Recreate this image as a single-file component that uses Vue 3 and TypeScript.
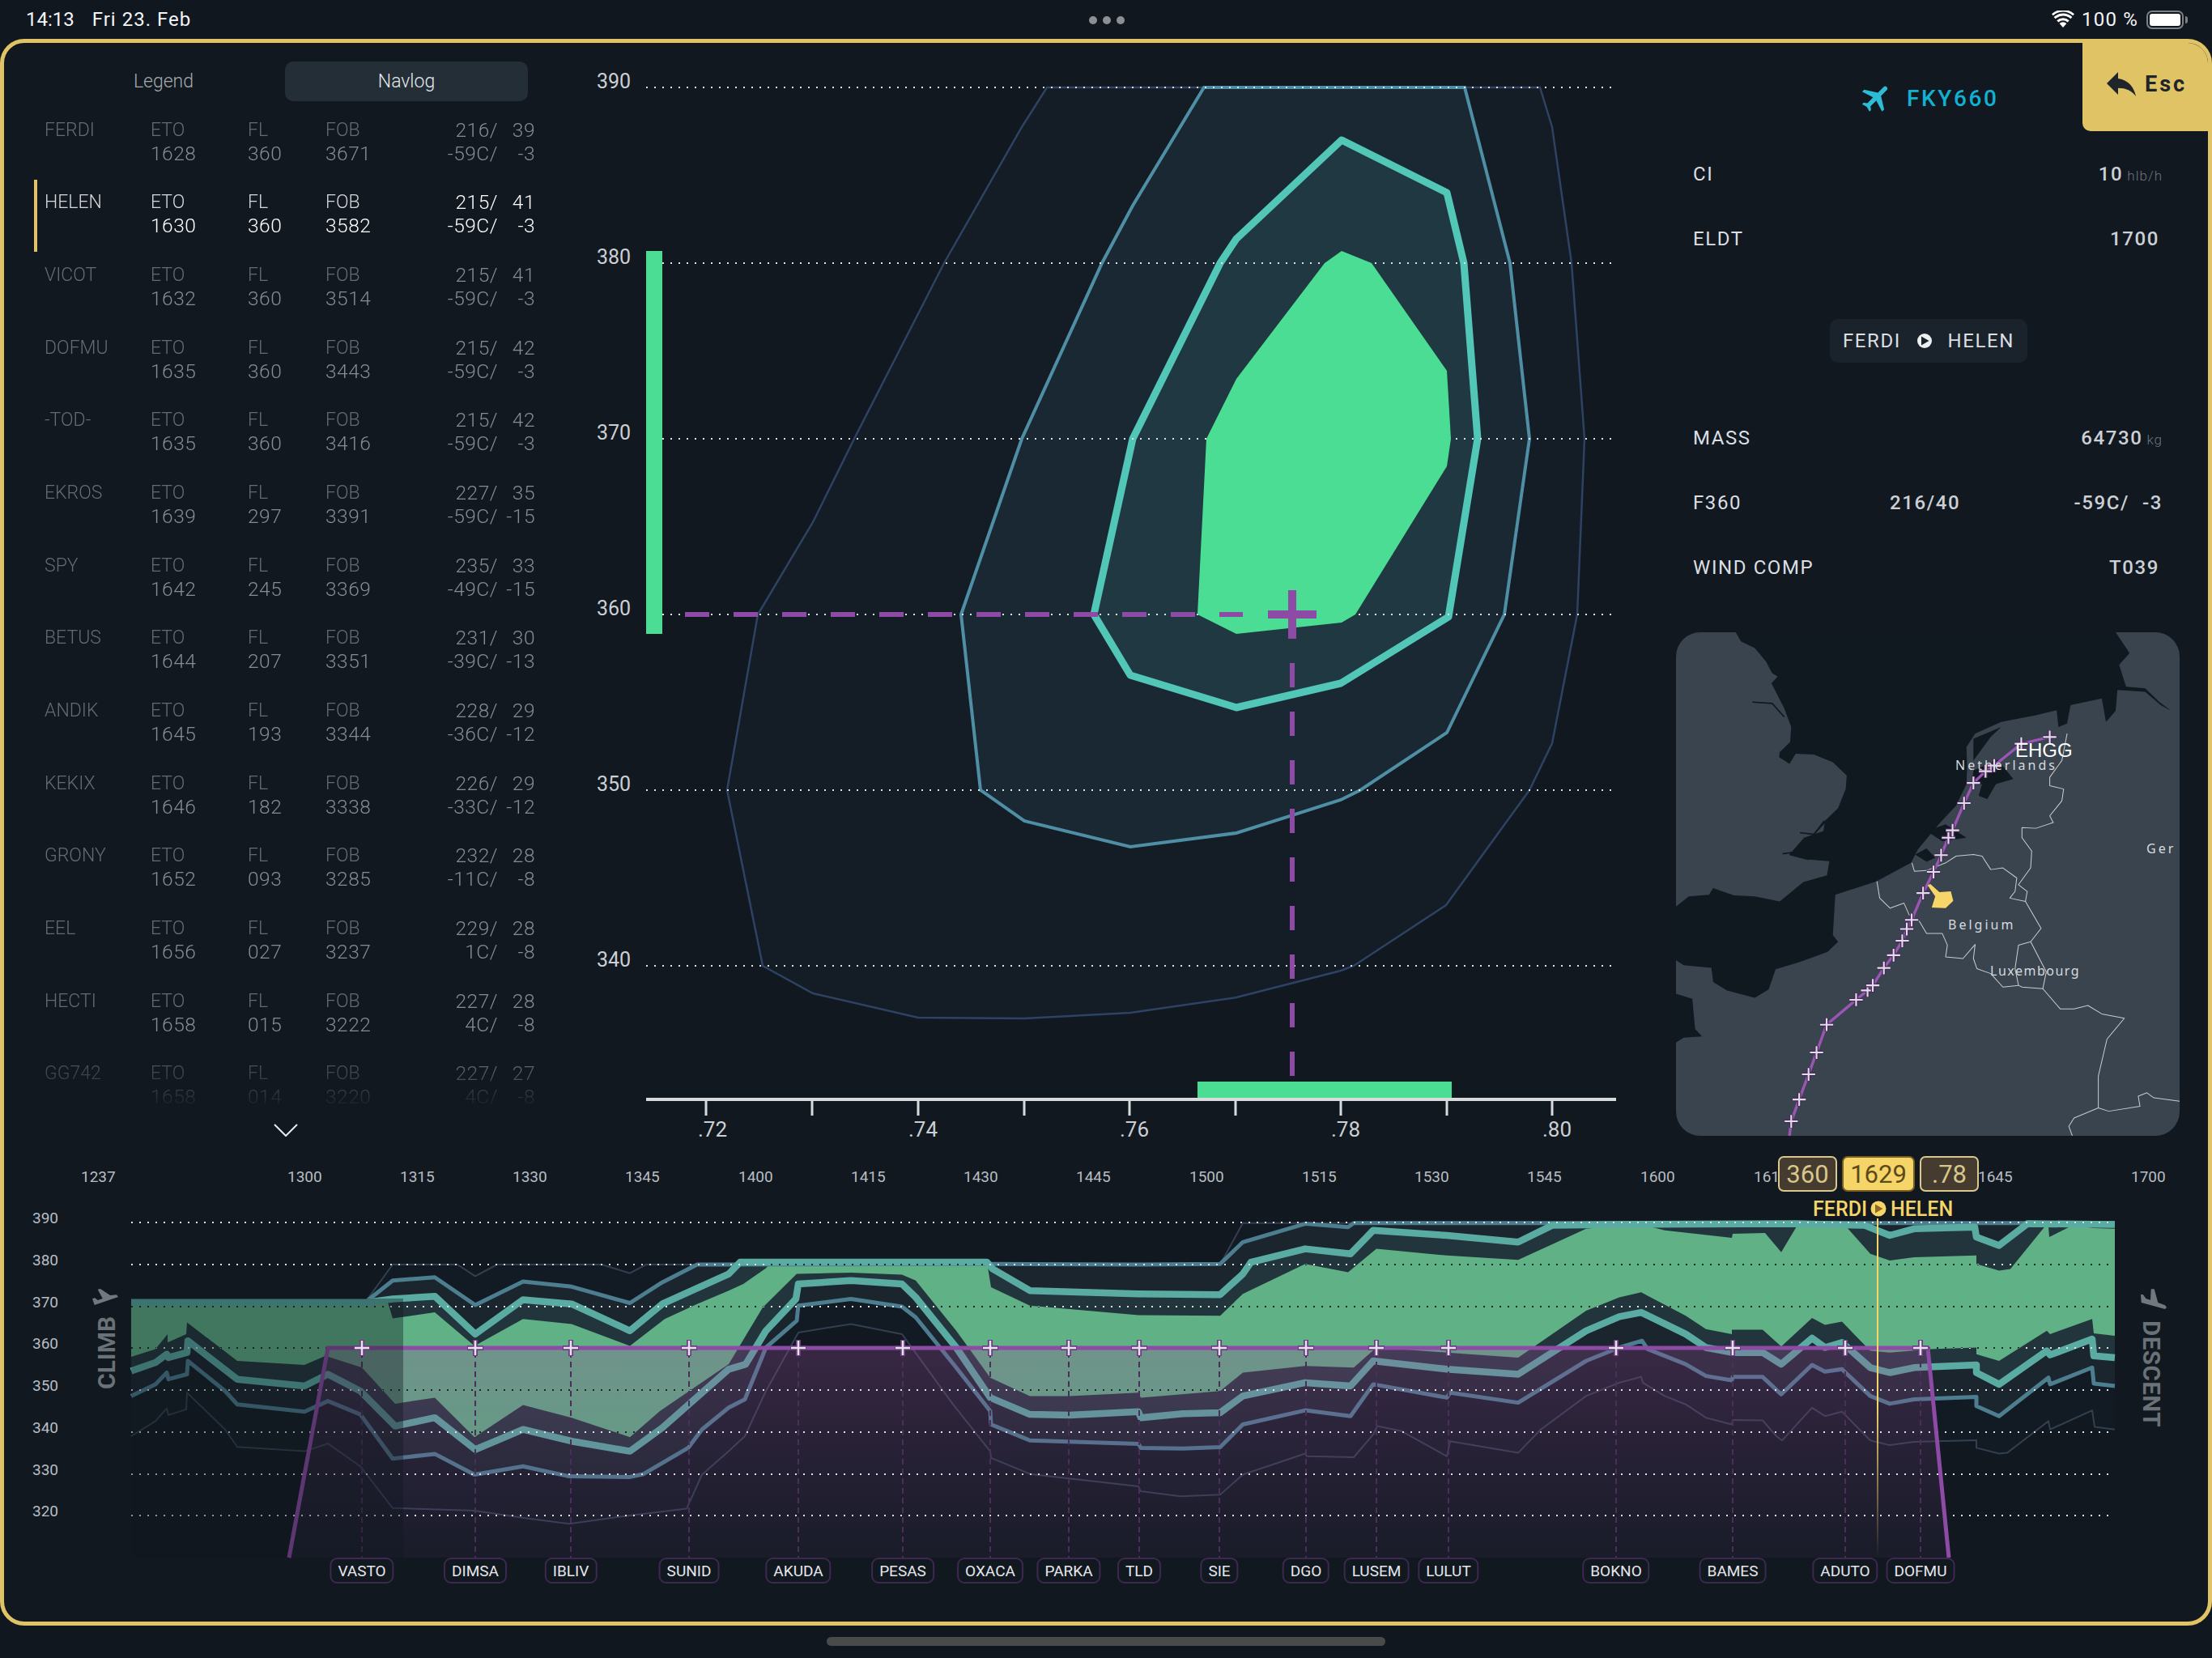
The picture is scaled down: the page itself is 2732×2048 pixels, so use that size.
<template>
  <div class="screen">
    <header class="status-bar">
      <div class="status-left">
        <span>14:13</span>
        <span class="status-date">Fri 23. Feb</span>
      </div>
      <div class="status-dots"><i></i><i></i><i></i></div>
      <div class="status-right">
        <svg class="wifi" viewBox="0 0 28 22" width="28" height="22">
          <path d="M14 21 9.6 16a6.4 6.4 0 0 1 8.8 0z" fill="#fff" />
          <path d="M7.3 13.4a9.8 9.8 0 0 1 13.4 0" fill="none" stroke="#fff" stroke-width="3" />
          <path d="M3.6 9.2a15.2 15.2 0 0 1 20.8 0" fill="none" stroke="#fff" stroke-width="3" />
          <path d="M0.9 5.2a19.6 19.6 0 0 1 26.2 0" fill="none" stroke="#fff" stroke-width="2.6" />
        </svg>
        <span>100 %</span>
        <div class="battery"><div class="battery-level"></div></div>
        <div class="battery-cap"></div>
      </div>
    </header>

    <main class="frame">
      <button class="esc-tab">
        <svg viewBox="3 5 18 15" width="36" height="30"><path :d="replyIcon" fill="#20252c" /></svg>
        <span>Esc</span>
      </button>

      <section class="top-row">
        <aside class="navlog">
          <div class="tabs">
            <div class="tab">Legend</div>
            <div class="tab tab-active">Navlog</div>
          </div>
          <div class="nav-list">
            <div v-for="row in navRows" :key="row.name" class="nav-row" :class="{ active: row.name === 'HELEN' }">
              <div class="cell">
                <span class="cap">{{ row.name }}</span>
              </div>
              <div class="cell">
                <span class="cap">ETO</span>
                <span class="val">{{ row.eto }}</span>
              </div>
              <div class="cell">
                <span class="cap">FL</span>
                <span class="val">{{ row.fl }}</span>
              </div>
              <div class="cell">
                <span class="cap">FOB</span>
                <span class="val">{{ row.fob }}</span>
              </div>
              <div class="wind">
                <span>{{ row.dir }}/</span><span>{{ row.spd }}</span>
                <span>{{ row.temp }}/</span><span>{{ row.comp }}</span>
              </div>
            </div>
          </div>
          <svg class="chevron" viewBox="0 0 30 16" width="30" height="16">
            <path d="M1 1 15 15 29 1" fill="none" stroke="#e8eaec" stroke-width="2" />
          </svg>
        </aside>

        <svg class="envelope" viewBox="720 53 1335 1367" width="1335" height="1367">
          <polygon :points="envOuter" fill="#141c25" stroke="#2e4263" stroke-width="2.5" />
          <polygon :points="envMid" fill="#1a2833" stroke="#4f8fa5" stroke-width="4" />
          <polygon :points="envInner" fill="#203841" stroke="#52c7b8" stroke-width="9" stroke-linejoin="round" />
          <line v-for="y in envGrid" :key="y" x1="798" x2="1991" :y1="y" :y2="y" class="dots" />
          <polygon :points="envGreen" fill="#4cdd94" />

          <text v-for="(l, i) in envLevels" :key="l" x="737" :y="envGrid[i]" class="env-level" dy="1">{{ l }}</text>

          <rect x="798" y="310" width="20" height="473" fill="#4cdd94" />
          <rect x="1479" y="1336" width="314" height="20" fill="#4cdd94" />

          <line x1="846" x2="1535" y1="759" y2="759" stroke="#8e4ba5" stroke-width="6" stroke-dasharray="30 30" />
          <line x1="1596" x2="1596" y1="819" y2="1329" stroke="#8e4ba5" stroke-width="6" stroke-dasharray="30 30" />
          <rect x="1566" y="754" width="60" height="10" fill="#8e4ba5" />
          <rect x="1591" y="729" width="10" height="60" fill="#8e4ba5" />

          <line x1="798" x2="1996" y1="1358" y2="1358" stroke="#d8dbde" stroke-width="4" />
          <line v-for="x in envTicks" :key="x" :x1="x" :x2="x" y1="1358" y2="1378" stroke="#d8dbde" stroke-width="3" />
          <text v-for="t in envMach" :key="t.label" :x="t.x" y="1404" class="env-mach">{{ t.label }}</text>
        </svg>

        <aside class="info">
          <div class="callsign">
            <svg viewBox="0 0 24 24" width="44" height="44" class="callsign-plane"><path :d="flightIcon" fill="#2cbcd6" /></svg>
            <span>FKY660</span>
          </div>
          <div class="info-row">
            <span>CI</span>
            <span class="info-val">10<small>hlb/h</small></span>
          </div>
          <div class="info-row">
            <span>ELDT</span>
            <span class="info-val pad">1700</span>
          </div>
          <div class="route-pill">
            <span>FERDI</span>
            <svg viewBox="0 0 18 18" width="18" height="18">
              <circle cx="9" cy="9" r="9" fill="#eceef0" />
              <path d="M5 3.5 14.5 9 5 14.5z" fill="#1a222b" />
            </svg>
            <span>HELEN</span>
          </div>
          <div class="info-row">
            <span>MASS</span>
            <span class="info-val">64730<small>kg</small></span>
          </div>
          <div class="info-row wide">
            <span>F360</span>
            <span class="info-val">216/40</span>
            <span class="info-val temp"><span>-59C/</span><span>-3</span></span>
          </div>
          <div class="info-row">
            <span>WIND COMP</span>
            <span class="info-val pad">T039</span>
          </div>

          <svg class="map" viewBox="0 0 622 622" width="622" height="622">
            <rect width="622" height="622" fill="#3a444f" />
            <g transform="scale(.4286 .4146) translate(-23 -28)">
              <path :d="seaPath" fill="#101820" />
              <path d="M880 440 950 408 995 465 945 480 920 525 895 515 905 480 875 482Z" fill="#101820" />
              <path d="M880 345 960 310 930 340 880 410Z" fill="#101820" />
              <path d="M712 690 745 672 770 700 745 712ZM745 620 800 600 860 640 790 650Z" fill="#101820" />
              <path d="M23 1105 70 1120 78 1210 98 1232 45 1236 23 1250Z" fill="#101820" />
              <g fill="none" stroke="#101820" stroke-width="4">
                <path d="M243 236 300 240 335 280" />
                <path d="M330 688 385 680 450 590" />
                <path d="M350 690 405 705" />
                <path d="M380 625 420 630 455 590" />
              </g>
              <g fill="none" stroke="#c8ccd0" stroke-width="2.4" stroke-linejoin="round">
                <polyline v-for="(b, i) in borders" :key="i" :points="b" />
              </g>
              <polyline :points="routePts" fill="none" stroke="#9b55b5" stroke-width="8" />
              <g v-for="(p, i) in routeFixes" :key="i">
                <path :d="crossPath(p[0], p[1], 20)" stroke="#46285a" stroke-width="11" fill="none" />
                <path :d="crossPath(p[0], p[1], 19)" stroke="#e3dbe8" stroke-width="5" fill="none" />
              </g>
              <path d="M748 782 756 778 782 802 815 800 822 828 800 850 760 848 770 815Z" fill="#f8d568" />
            </g>
            <text x="345" y="170" class="map-label">Netherlands</text>
            <text x="336" y="367" class="map-label">Belgium</text>
            <text x="388" y="424" class="map-label tight">Luxembourg</text>
            <text x="581" y="273" class="map-label">Ger</text>
            <text x="419" y="154" class="map-airport">EHGG</text>
          </svg>
        </aside>
      </section>

      <section class="profile">
        <svg viewBox="5 1420 2722 583" width="2722" height="583">
          <defs>
            <linearGradient id="purpleFade" x1="0" y1="0" x2="0" y2="1">
              <stop offset="0" stop-color="#964b96" stop-opacity=".3" />
              <stop offset="1" stop-color="#5a3a70" stop-opacity=".12" />
            </linearGradient>
            <linearGradient id="cursorFade" x1="0" y1="0" x2="0" y2="1">
              <stop offset="0" stop-color="#f6d568" />
              <stop offset=".55" stop-color="#f6d568" />
              <stop offset="1" stop-color="#f6d568" stop-opacity="0" />
            </linearGradient>
            <clipPath id="greenClip"><polygon :points="bandGreen" /></clipPath>
          </defs>

          <text v-for="t in timeLabels" :key="t.label" :x="t.x" y="1460" class="time-label">{{ t.label }}</text>

          <polygon :points="bandOuter" fill="#121a23" />
          <polygon :points="bandMid" fill="#1a252d" />
          <polygon :points="bandInner" fill="#23353c" />
          <polygon :points="bandGreen" fill="#60b286" />
          <polyline :points="outerLow" class="line-outer" />
          <polyline :points="outerUp" class="line-outer" />
          <polyline :points="midLow" class="line-mid" />
          <polyline :points="midUp" class="line-mid" />
          <polyline :points="innerLow" class="line-inner" />
          <polyline :points="innerUp" class="line-inner" />

          <polygon points="357,1924 405,1665 2381,1665 2407,1924" fill="url(#purpleFade)" />
          <line v-for="w in waypoints" :key="w.name" :x1="w.x" :x2="w.x" y1="1670" y2="1924" class="way-dash" />

          <g v-for="(y, i) in profGrid" :key="y">
            <line x1="162" x2="2604" :y1="y" :y2="y" class="dots" />
            <line x1="162" x2="2604" :y1="y" :y2="y" class="dots dots-dark" clip-path="url(#greenClip)" />
            <text x="40" :y="y" dy="1" class="prof-level">{{ profLevels[i] }}</text>
          </g>

          <polyline points="357,1924 405,1665 2381,1665 2407,1924" fill="none" stroke="#8e4ba5" stroke-width="5" />
          <rect x="162" y="1604" width="336" height="320" fill="#10171f" fill-opacity=".38" />

          <g v-for="w in waypoints" :key="w.name + '-x'">
            <path :d="crossPath(w.x, 1665, 10)" stroke="#6b3d80" stroke-width="6" fill="none" />
            <path :d="crossPath(w.x, 1665, 9)" stroke="#e8e0ec" stroke-width="2.5" fill="none" />
          </g>

          <rect x="2318" y="1505" width="2" height="419" fill="url(#cursorFade)" />

          <polygon
            points="114,1604 117.3,1603.3 120.7,1606 126.7,1604 120.7,1592.7 124,1592 136,1600 144,1599.3 146,1602 116.7,1612"
            fill="#71797e"
          />
          <text class="side-label" transform="translate(142 1716) rotate(-90)">CLIMB</text>
          <polygon
            points="2644,1599 2646.7,1599 2650.7,1604.3 2656,1605.7 2656.7,1592.3 2660.7,1592.3 2665.3,1609 2674,1612.3 2676,1615 2674,1617 2644.7,1609"
            fill="#71797e"
          />
          <text class="side-label descent" transform="translate(2647 1631) rotate(90)">DESCENT</text>

          <rect x="2197" y="1429" width="71" height="42" rx="6" class="flag" />
          <text x="2232.5" y="1461" class="flag-text">360</text>
          <rect x="2276" y="1429" width="88" height="42" rx="6" class="flag flag-now" />
          <text x="2320" y="1461" class="flag-text now">1629</text>
          <rect x="2372" y="1429" width="71" height="42" rx="6" class="flag" />
          <text x="2407.5" y="1461" class="flag-text">.78</text>

          <text x="2239" y="1502" class="leg-text">FERDI</text>
          <circle cx="2320" cy="1493" r="9.5" fill="#f6d568" />
          <path d="M2316 1487.5 2325.5 1493 2316 1498.5z" fill="#8a6a22" />
          <text x="2335" y="1502" class="leg-text">HELEN</text>
        </svg>
        <div
          v-for="w in waypoints"
          :key="w.name + '-t'"
          class="way-label"
          :style="{ left: w.x - 5 + 'px' }"
        >
          {{ w.name }}
        </div>
      </section>
    </main>

    <footer class="home-row"><div class="home-bar"></div></footer>
  </div>
</template>

<script setup lang="ts">
interface NavRow {
  name: string
  eto: string
  fl: string
  fob: string
  dir: string
  spd: string
  temp: string
  comp: string
}

type Coord = [number, number]

const flightIcon =
  'M21 16v-2l-8-5V3.5c0-.83-.67-1.5-1.5-1.5S10 2.67 10 3.5V9l-8 5v2l8-2.5V19l-2 1.5V22l3.5-1 3.5 1v-1.5L13 19v-5.5l8 2.5z'
const replyIcon = 'M10 9V5l-7 7 7 7v-4.1c5 0 8.5 1.6 11 5.1-1-5-4-10-11-11z'

function nav(line: string): NavRow {
  const [name, eto, fl, fob, dir, spd, temp, comp] = line.split(' ')
  return { name, eto, fl, fob, dir, spd, temp, comp }
}

const navRows: NavRow[] = [
  'FERDI 1628 360 3671 216 39 -59C -3',
  'HELEN 1630 360 3582 215 41 -59C -3',
  'VICOT 1632 360 3514 215 41 -59C -3',
  'DOFMU 1635 360 3443 215 42 -59C -3',
  '-TOD- 1635 360 3416 215 42 -59C -3',
  'EKROS 1639 297 3391 227 35 -59C -15',
  'SPY 1642 245 3369 235 33 -49C -15',
  'BETUS 1644 207 3351 231 30 -39C -13',
  'ANDIK 1645 193 3344 228 29 -36C -12',
  'KEKIX 1646 182 3338 226 29 -33C -12',
  'GRONY 1652 093 3285 232 28 -11C -8',
  'EEL 1656 027 3237 229 28 1C -8',
  'HECTI 1658 015 3222 227 28 4C -8',
  'GG742 1658 014 3220 227 27 4C -8',
].map(nav)

// envelope chart, page coordinates
const envGrid = [108, 325, 542, 759, 976, 1193]
const envLevels = [390, 380, 370, 360, 350, 340]
const envTicks = [872, 1003, 1134, 1265, 1395, 1526, 1656, 1787, 1917]
const envMach = [
  { label: '.72', x: 862 },
  { label: '.74', x: 1122 },
  { label: '.76', x: 1383 },
  { label: '.78', x: 1644 },
  { label: '.80', x: 1905 },
]
const envGreen = '1657,310 1694,325 1787,458 1792,542 1787,576 1674,759 1657,769 1527,783 1479,759 1490,542 1527,468 1636,325'
const envInner = '1657,173 1787,238 1808,325 1825,542 1789,762 1656,844 1527,874 1396,834 1351,759 1399,542 1507,325 1527,295'
const envMid = '1487,108 1809,108 1865,325 1889,542 1858,759 1787,905 1680,976 1656,988 1527,1029 1396,1046 1265,1014 1211,976 1187,759 1262,542 1361,325 1399,254'
const envOuter = '1293,108 1902,108 1917,157 1941,325 1957,542 1948,759 1917,918 1889,976 1786,1118 1672,1193 1656,1199 1527,1232 1396,1251 1265,1258 1134,1257 1004,1227 942,1193 898,976 936,759 1004,645 1055,542 1166,325 1262,157'

// map, coordinates measured on the zoomed crop
const seaPath =
  'M195 28 210 55 250 75 282 115 300 150 316 160 298 180 335 255 355 310 352 355 322 385 320 400 350 420 368 390 420 392 475 415 515 455 512 495 490 552 452 590 448 620 392 640 350 690 405 705 465 710 458 752 390 772 322 830 250 815 190 812 130 790 118 810 60 815 23 845 23 1005 45 1020 125 1028 130 1070 170 1095 250 1117 290 1092 310 1032 380 1010 460 980 490 950 475 930 482 810 600 770 700 715 720 675 780 600 830 545 860 480 862 430 860 370 885 330 960 295 1060 275 1120 260 1125 310 1150 300 1160 245 1250 225 1262 295 1290 262 1295 200 1375 205 1420 245 1450 262 1415 235 1375 195 1320 190 1300 125 1330 90 1290 28Z'
const borders = [
  '602,770 610,820 640,850 680,835 695,870 725,890 745,925 790,925 805,960 800,995 850,1000 885,958 880,1000 890,1030 930,1045 965,1085 1010,1080 1020,1085 1080,1090 1130,1150 1170,1150 1210,1140 1250,1165 1315,1178 1265,1240 1240,1350 1240,1445 1170,1475 1155,1500 1165,1528',
  '703,715 710,740 745,738 800,715 830,695 880,690 905,695 930,735 965,730 1005,760 1000,800 985,820 1030,830 1075,910 1045,950 1010,960 1000,1030 1010,1080',
  '1150,330 1135,410 1100,460 1100,485 1140,495 1135,530 1100,575 1110,595 1060,612 1020,610 1020,640 1048,680 1045,730 1010,780 1035,800 1030,830',
  '1045,950 1090,1040 1080,1090',
  '1240,1445 1270,1455 1360,1440 1355,1410 1380,1400 1400,1415 1475,1425',
]
const routeFixes: Coord[] = [
  [355, 1485], [378, 1420], [405, 1345], [428, 1280], [457, 1197], [542, 1123], [575, 1095], [590, 1080],
  [622, 1028], [650, 990], [675, 947], [688, 912], [702, 885], [735, 805], [765, 742], [787, 692],
  [808, 640], [820, 618], [853, 537], [880, 477], [915, 442], [940, 425], [1018, 360], [1100, 340],
]
const routePts = ['350,1528', ...routeFixes.map((p) => p.join(','))].join(' ')

function crossPath(x: number, y: number, r: number): string {
  return `M${x - r} ${y}H${x + r}M${x} ${y - r}V${y + r}`
}

// profile chart: the curves were read from three zoomed crops with different scales
function readCrop(ox: number, sx: number, values: number[]): Coord[] {
  const out: Coord[] = []
  for (let i = 0; i < values.length; i += 2) {
    out.push([Math.round(ox + values[i] / sx), Math.round((1400 + values[i + 1] / 2.42) * 10) / 10])
  }
  return out
}
const left = (v: number[]) => readCrop(0, 1.742, v)
const mid = (v: number[]) => readCrop(900, 1.4255, v)
const right = (v: number[]) => readCrop(2000, 2.142, v)

const joined = (c: Coord[]) => c.map((p) => p.join(',')).join(' ')
const band = (up: Coord[], low: Coord[]) => joined([...up, ...[...low].reverse()])

const greenUpC = [
  ...left([282, 505, 835, 505, 845, 553, 935, 535, 1020, 635, 1125, 555, 1230, 570, 1355, 635, 1430, 555, 1500, 510, 1568, 470]),
  ...mid([25, 450, 65, 403, 75, 385, 455, 385, 462, 460, 530, 515, 600, 525, 722, 543, 865, 545, 905, 480, 1015, 390, 1090, 415, 1140, 345, 1265, 365, 1390, 378, 1510, 285, 1568, 275]),
  ...right([85, 280, 120, 290, 297, 312, 300, 300, 385, 298, 428, 355, 470, 278, 600, 278, 665, 360, 715, 380, 780, 370, 945, 365, 945, 390, 1005, 410, 1035, 405, 1125, 280, 1135, 278, 1138, 310, 1200, 275, 1255, 283, 1310, 285]),
]
const greenLowC = [
  ...left([282, 668, 335, 645, 360, 600, 360, 625, 400, 600, 402, 565, 510, 680, 655, 692, 700, 665, 778, 700, 850, 808, 935, 790, 1020, 908, 1125, 812, 1230, 850, 1355, 908, 1420, 830, 1568, 690]),
  ...mid([60, 520, 120, 420, 215, 416, 305, 422, 330, 440, 400, 590, 460, 730, 530, 785, 600, 785, 722, 775, 725, 790, 865, 770, 905, 715, 1015, 695, 1100, 700, 1140, 640, 1265, 655, 1390, 670, 1510, 530, 1568, 490]),
  ...right([58, 475, 175, 545, 230, 585, 297, 600, 297, 587, 380, 587, 428, 637, 510, 552, 545, 572, 590, 563, 665, 650, 715, 655, 825, 645, 945, 640, 945, 660, 1005, 680, 1130, 590, 1140, 600, 1250, 555, 1255, 598, 1310, 605]),
]
const innerUpC = [
  ...left([282, 505, 790, 505, 845, 495, 935, 487, 1022, 600, 1125, 497, 1230, 510, 1355, 590, 1425, 510, 1568, 420]),
  ...mid([20, 385, 455, 385, 465, 405, 530, 470, 722, 480, 865, 482, 905, 420, 920, 385, 1015, 345, 1095, 360, 1135, 290, 1265, 305, 1390, 325, 1450, 275, 1568, 272]),
  ...right([470, 270, 650, 275, 715, 305, 780, 285, 940, 280, 945, 310, 1005, 335, 1080, 270, 1310, 272]),
]
const innerLowC = [
  ...left([282, 710, 335, 685, 358, 660, 362, 670, 402, 655, 405, 620, 510, 735, 655, 755, 705, 720, 775, 770, 850, 875, 935, 850, 1022, 945, 1125, 885, 1230, 920, 1355, 950, 1425, 880, 1568, 705]),
  ...mid([30, 690, 65, 590, 118, 495, 122, 450, 215, 440, 305, 450, 330, 490, 400, 640, 460, 790, 530, 840, 600, 842, 722, 832, 725, 850, 800, 838, 865, 835, 905, 785, 1015, 745, 1095, 755, 1135, 680, 1265, 705, 1390, 720, 1510, 590, 1568, 548]),
  ...right([58, 535, 175, 600, 230, 640, 297, 655, 380, 655, 428, 690, 510, 612, 545, 640, 590, 625, 665, 700, 715, 715, 780, 700, 945, 692, 945, 715, 1005, 750, 1130, 650, 1140, 662, 1250, 615, 1255, 665, 1310, 670]),
]
const midUpC = [
  ...left([282, 505, 785, 505, 845, 440, 935, 430, 1022, 513, 1125, 443, 1230, 458, 1355, 507, 1425, 445, 1500, 392]),
  ...mid([460, 390, 725, 392, 865, 390, 905, 325, 1015, 270, 1090, 280, 1100, 268, 1568, 268]),
  ...right([1310, 268]),
]
const midLowC = [
  ...left([282, 785, 335, 750, 358, 715, 362, 735, 402, 720, 405, 680, 485, 770, 510, 810, 655, 832, 705, 800, 775, 840, 845, 972, 935, 958, 1020, 1020, 1125, 995, 1225, 1025, 1355, 1027, 1385, 1018, 1480, 940, 1510, 885, 1568, 820]),
  ...mid([28, 795, 65, 640, 120, 560, 122, 515, 215, 495, 305, 518, 330, 550, 400, 700, 460, 830, 462, 870, 530, 918, 722, 928, 725, 940, 800, 942, 865, 938, 905, 870, 1015, 828, 1095, 845, 1135, 750, 1265, 790, 1270, 775, 1390, 805, 1510, 680, 1568, 640]),
  ...right([60, 620, 75, 645, 175, 690, 230, 725, 297, 738, 300, 728, 380, 728, 428, 780, 510, 692, 545, 712, 590, 705, 665, 785, 715, 808, 780, 795, 945, 788, 945, 815, 1005, 845, 1135, 730, 1140, 750, 1250, 700, 1255, 748, 1310, 755]),
]
const outerUpC = [
  ...left([282, 505, 785, 505, 845, 392, 985, 392, 1022, 427, 1070, 392, 1295, 392, 1355, 418, 1390, 392]),
  ...mid([865, 392, 905, 268, 1568, 268]),
  ...right([1310, 268]),
]
const outerLowC = [
  ...left([282, 905, 335, 860, 358, 822, 362, 842, 400, 825, 403, 775, 485, 885, 510, 937, 655, 950, 705, 927, 775, 995, 845, 1120, 1020, 1128, 1130, 1150, 1225, 1167, 1355, 1142, 1478, 1122, 1510, 1020, 1568, 950]),
  ...mid([28, 905, 65, 770, 122, 595, 215, 570, 305, 600, 395, 810, 460, 950, 462, 970, 530, 1018, 722, 1055, 725, 1070, 795, 1085, 865, 1080, 905, 1020, 1015, 957, 1018, 965, 1100, 968, 1135, 900, 1142, 875, 1185, 890, 1265, 965, 1270, 920, 1390, 955, 1430, 885, 1510, 785, 1568, 745]),
  ...right([58, 728, 62, 745, 120, 785, 175, 810, 230, 850, 297, 870, 300, 857, 380, 858, 415, 905, 430, 918, 510, 820, 545, 845, 590, 832, 665, 918, 715, 932, 780, 922, 945, 917, 945, 940, 1005, 957, 1025, 955, 1135, 860, 1140, 885, 1250, 828, 1258, 877, 1310, 885]),
]

const bandGreen = band(greenUpC, greenLowC)
const bandInner = band(innerUpC, innerLowC)
const bandMid = band(midUpC, midLowC)
const bandOuter = band(outerUpC, outerLowC)
const innerUp = joined(innerUpC)
const innerLow = joined(innerLowC)
const midUp = joined(midUpC)
const midLow = joined(midLowC)
const outerUp = joined(outerUpC)
const outerLow = joined(outerLowC)

const profGrid = [1510, 1562, 1614, 1665, 1717, 1769, 1821, 1872]
const profLevels = [390, 380, 370, 360, 350, 340, 330, 320]

const timeLabels = [
  { label: '1237', x: 100 },
  { label: '1300', x: 355 },
  { label: '1315', x: 494 },
  { label: '1330', x: 633 },
  { label: '1345', x: 772 },
  { label: '1400', x: 912 },
  { label: '1415', x: 1051 },
  { label: '1430', x: 1190 },
  { label: '1445', x: 1329 },
  { label: '1500', x: 1469 },
  { label: '1515', x: 1608 },
  { label: '1530', x: 1747 },
  { label: '1545', x: 1886 },
  { label: '1600', x: 2026 },
  { label: '161', x: 2166 },
  { label: '1645', x: 2443 },
  { label: '1700', x: 2632 },
]

const waypoints = [
  { name: 'VASTO', x: 447 },
  { name: 'DIMSA', x: 587 },
  { name: 'IBLIV', x: 705 },
  { name: 'SUNID', x: 851 },
  { name: 'AKUDA', x: 986 },
  { name: 'PESAS', x: 1115 },
  { name: 'OXACA', x: 1223 },
  { name: 'PARKA', x: 1320 },
  { name: 'TLD', x: 1407 },
  { name: 'SIE', x: 1506 },
  { name: 'DGO', x: 1613 },
  { name: 'LUSEM', x: 1700 },
  { name: 'LULUT', x: 1789 },
  { name: 'BOKNO', x: 1996 },
  { name: 'BAMES', x: 2140 },
  { name: 'ADUTO', x: 2279 },
  { name: 'DOFMU', x: 2372 },
]
</script>

<style>
html,
body {
  margin: 0;
  background: #10171f;
}
</style>

<style scoped>
.screen {
  width: 2732px;
  height: 2048px;
  display: flex;
  flex-direction: column;
  background: #10171f;
  color: #e8eaec;
  font-family: Roboto, 'Noto Sans', sans-serif;
  overflow: hidden;
}

.status-bar {
  height: 48px;
  flex: none;
  display: flex;
  align-items: center;
  justify-content: space-between;
  padding: 0 30px 0 32px;
  font-size: 24px;
  color: #f4f5f6;
  position: relative;
}

.status-left {
  display: flex;
  gap: 22px;
}

.status-date {
  letter-spacing: 1px;
}

.status-dots {
  position: absolute;
  left: 1345px;
  top: 20px;
  display: flex;
  gap: 7px;
}

.status-dots i {
  width: 10px;
  height: 10px;
  border-radius: 50%;
  background: #8c9095;
}

.status-right {
  display: flex;
  align-items: center;
}

.status-right span {
  margin: 0 10px 0 9px;
  letter-spacing: 1.2px;
}

.battery {
  width: 46px;
  height: 23px;
  box-sizing: border-box;
  border: 2px solid #7d8084;
  border-radius: 7px;
  padding: 2px;
}

.battery-level {
  height: 100%;
  background: #fff;
  border-radius: 3px;
}

.battery-cap {
  width: 3px;
  height: 9px;
  margin-left: 2px;
  background: #7d8084;
  border-radius: 0 3px 3px 0;
}

.frame {
  height: 1960px;
  flex: none;
  box-sizing: border-box;
  border: 5px solid #dfc365;
  border-radius: 30px;
  background: #111820;
  position: relative;
  overflow: hidden;
  display: flex;
  flex-direction: column;
}

.esc-tab {
  position: absolute;
  right: 0;
  top: 0;
  width: 155px;
  height: 109px;
  box-sizing: border-box;
  border: none;
  padding: 0 0 8px 30px;
  border-bottom-left-radius: 10px;
  background: #dfc365;
  color: #20252c;
  display: flex;
  align-items: center;
  gap: 11px;
  font: 700 27px Roboto, sans-serif;
  letter-spacing: 3px;
  z-index: 2;
}

.top-row {
  height: 1367px;
  flex: none;
  display: flex;
}

.navlog {
  width: 715px;
  flex: none;
  box-sizing: border-box;
  padding: 23px 0 0 37px;
}

.tabs {
  display: flex;
  margin-left: 10px;
  height: 49px;
  margin-bottom: 7px;
}

.tab {
  width: 300px;
  display: flex;
  align-items: center;
  justify-content: center;
  font-size: 23px;
  font-weight: 300;
  color: #a3a9ae;
  border-radius: 10px;
}

.tab-active {
  background: #232e37;
  color: #e4e7ea;
}

.nav-list {
  height: 1240px;
  overflow: hidden;
  width: 619px;
  -webkit-mask-image: linear-gradient(#000 1158px, transparent 1240px);
  mask-image: linear-gradient(#000 1158px, transparent 1240px);
}

.nav-row {
  height: 89.7px;
  box-sizing: border-box;
  border-left: 4px solid transparent;
  padding: 13.5px 0 0 9px;
  display: grid;
  grid-template-columns: 131px 120px 96px 90px 1fr;
  line-height: 29px;
  font-weight: 300;
  color: #858c93;
}

.nav-row.active {
  border-left-color: #dfc365;
  color: #fff;
}

.cell {
  display: flex;
  flex-direction: column;
}

.cap {
  font-size: 23px;
  color: #646b72;
}

.active .cap {
  color: #d5d8dc;
}

.val {
  font-size: 24.5px;
  letter-spacing: 0.5px;
}

.wind {
  display: grid;
  grid-template-columns: auto 46px;
  justify-content: end;
  align-content: start;
  font-size: 24.5px;
  letter-spacing: 0.5px;
  text-align: right;
}

.chevron {
  display: block;
  margin: 16px 0 0 296px;
}

.envelope {
  flex: none;
  display: block;
}

.dots {
  stroke: #dfe2e5;
  stroke-width: 2;
  stroke-dasharray: 2 8;
}

.dots-dark {
  stroke: #1a2a2a;
}

.env-level {
  font-size: 25px;
  fill: #ccd0d4;
}

.env-mach {
  font-size: 26px;
  fill: #ccd0d4;
}

.info {
  width: 672px;
  min-width: 0;
  flex: none;
  box-sizing: border-box;
  padding: 0 56px 0 36px;
  display: flex;
  flex-direction: column;
  font-size: 24px;
  letter-spacing: 1.6px;
  color: #dcdfe2;
}

.callsign {
  height: 122px;
  flex: none;
  display: flex;
  align-items: center;
  box-sizing: border-box;
  padding: 14px 0 0 205px;
  gap: 15px;
  font-size: 28px;
  font-weight: 500;
  letter-spacing: 2.6px;
  color: #10b1d2;
}

.callsign-plane {
  transform: rotate(45deg);
}

.info-row {
  height: 80px;
  flex: none;
  display: flex;
  justify-content: space-between;
  align-items: center;
}

.info-row.wide {
  display: grid;
  grid-template-columns: 243px 1fr auto;
}

.info-val {
  font-weight: 500;
  color: #ccd0d4;
  display: inline-flex;
  align-items: baseline;
}

.info-val.pad {
  margin-right: 4px;
}

.info-val small {
  font-size: 17px;
  font-weight: 300;
  letter-spacing: 1px;
  color: #6e757c;
  margin-left: 5px;
}

.temp {
  gap: 16px;
}

.route-pill {
  width: 244px;
  height: 54px;
  flex: none;
  margin: 59px 0 53px 169px;
  box-sizing: border-box;
  padding: 0 16px;
  border-radius: 10px;
  background: #1a222b;
  display: flex;
  align-items: center;
  justify-content: space-between;
}

.map {
  flex: none;
  display: block;
  margin: 40px 0 0 -21px;
  border-radius: 30px;
}

.map-label {
  font-family: 'Noto Sans', sans-serif;
  font-size: 16px;
  letter-spacing: 3px;
  fill: #d6dade;
}

.map-label.tight {
  letter-spacing: 1.5px;
}

.map-airport {
  font-family: 'Liberation Sans', sans-serif;
  font-size: 24px;
  letter-spacing: 0;
  fill: #fff;
}

.profile {
  flex: 1;
  position: relative;
}

.profile svg {
  display: block;
}

.time-label,
.prof-level {
  font-size: 19px;
  fill: #b8bdc2;
}

.line-outer,
.line-mid,
.line-inner {
  fill: none;
  stroke-linejoin: round;
}

.line-outer {
  stroke: #333f50;
  stroke-width: 2;
}

.line-mid {
  stroke: #4d7e90;
  stroke-width: 5;
}

.line-inner {
  stroke: #5aaca2;
  stroke-width: 8.5;
}

.way-dash {
  stroke: #4a2f58;
  stroke-width: 2;
  stroke-dasharray: 7 5;
}

.side-label {
  font-size: 30px;
  font-weight: 700;
  fill: #6a7277;
}

.side-label.descent {
  font-size: 29.5px;
  letter-spacing: 0.5px;
}

.flag {
  fill: #463b2f;
  stroke: #d8c88d;
  stroke-width: 2;
}

.flag-now {
  fill: #f6d568;
  stroke: #7a5f22;
}

.flag-text {
  font-size: 31px;
  fill: #d9c68b;
  text-anchor: middle;
}

.flag-text.now {
  fill: #5d4a1a;
}

.leg-text {
  font-size: 25px;
  font-weight: 500;
  fill: #f6d568;
}

.way-label {
  position: absolute;
  top: 504px;
  height: 32px;
  transform: translateX(-50%);
  box-sizing: border-box;
  padding: 1px 8px 0;
  border: 2px solid #3d2850;
  border-radius: 9px;
  background: #111820;
  font-size: 19px;
  line-height: 28px;
  color: #e5e7ea;
  white-space: nowrap;
}

.home-row {
  flex: 1;
  display: flex;
  justify-content: center;
  align-items: flex-start;
  padding-top: 14px;
}

.home-bar {
  width: 690px;
  height: 11px;
  border-radius: 6px;
  background: #4a4a4a;
}
</style>
